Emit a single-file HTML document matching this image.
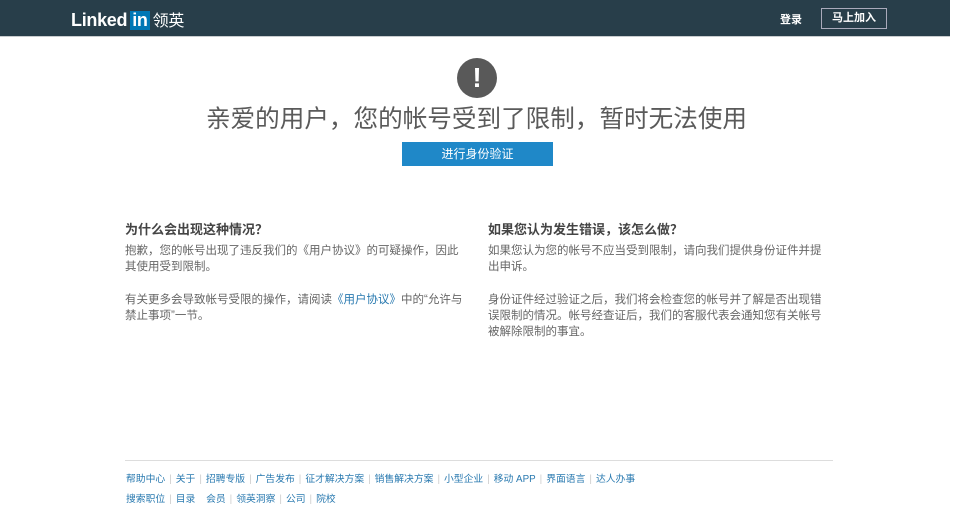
<!DOCTYPE html><html><head><meta charset="utf-8"><style>
body{margin:0;width:953px;height:507px;background:#fff;font-family:"Liberation Sans","Noto Sans CJK SC",sans-serif;position:relative;overflow:hidden}
.hd{position:absolute;left:0;top:0;width:950px;height:36px;background:#283e4a;border-bottom:1px solid #c8ccce}
.logo{position:absolute;left:71px;top:7px;color:#fff;font-weight:bold;font-size:18px;letter-spacing:-0.3px}
.in{display:inline-block;background:#0077b5;padding:0 2px;line-height:19px;margin-left:3px}
.ly{font-weight:normal;font-size:16px;margin-left:3px}
.login{position:absolute;left:780px;top:11px;color:#fff;font-size:11px;font-weight:bold}
.join{position:absolute;left:821px;top:8px;width:64px;height:19px;border:1px solid #aab;color:#fff;font-size:11px;font-weight:bold;text-align:center;line-height:19px}
.ic{position:absolute;left:457px;top:58px;width:40px;height:40px;border-radius:50%;background:#595959;color:#fff;text-align:center;font-weight:bold;font-size:28px;line-height:40px}
h1{position:absolute;left:0;width:953px;top:99px;margin:0;text-align:center;font-weight:normal;font-size:24.6px;color:#5a5a5a}
.btn{position:absolute;left:402px;top:142px;width:151px;height:24px;background:#1f88c8;color:#fff;font-size:12px;text-align:center;line-height:24px}
.col{position:absolute;top:222px;width:340px;font-size:11.5px;color:#666;line-height:16px}
.col h3{margin:0 0 5px;font-size:13px;color:#444;line-height:16px}
.col p{margin:0 0 17px}
a{color:#2a7ab0;text-decoration:none}
.line{position:absolute;left:125px;top:460px;width:708px;height:1px;background:#ddd}
.ft{position:absolute;left:126px;font-size:9.8px;color:#2a7ab0}
.ft span{color:#ccc;margin:0 4px}
</style></head><body>
<div class="hd"><div class="logo">Linked<span class="in">in</span><span class="ly">领英</span></div>
<div class="login">登录</div><div class="join">马上加入</div></div>
<div class="ic">!</div>
<h1>亲爱的用户，您的帐号受到了限制，暂时无法使用</h1>
<div class="btn">进行身份验证</div>
<div class="col" style="left:125px"><h3>为什么会出现这种情况？</h3><p>抱歉，您的帐号出现了违反我们的《用户协议》的可疑操作，因此其使用受到限制。</p><p>有关更多会导致帐号受限的操作，请阅读<a>《用户协议》</a>中的“允许与禁止事项”一节。</p></div>
<div class="col" style="left:488px"><h3>如果您认为发生错误，该怎么做？</h3><p>如果您认为您的帐号不应当受到限制，请向我们提供身份证件并提出申诉。</p><p>身份证件经过验证之后，我们将会检查您的帐号并了解是否出现错误限制的情况。帐号经查证后，我们的客服代表会通知您有关帐号被解除限制的事宜。</p></div>
<div class="line"></div>
<div class="ft" style="top:471px">帮助中心<span>|</span>关于<span>|</span>招聘专版<span>|</span>广告发布<span>|</span>征才解决方案<span>|</span>销售解决方案<span>|</span>小型企业<span>|</span>移动 APP<span>|</span>界面语言<span>|</span>达人办事</div>
<div class="ft" style="top:491px">搜索职位<span>|</span>目录<span> </span>会员<span>|</span>领英洞察<span>|</span>公司<span>|</span>院校</div>
</body></html>
